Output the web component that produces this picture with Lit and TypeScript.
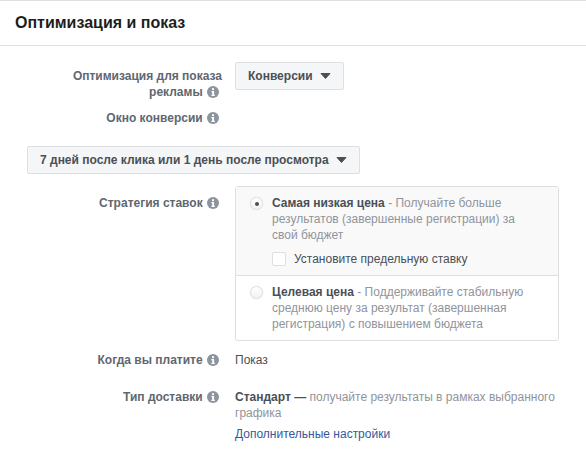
import { LitElement, html, css } from "lit";
import { customElement } from "lit/decorators.js";

const info = html`<svg class="info" viewBox="0 0 12 12" width="12" height="12"><circle cx="6" cy="6" r="6" fill="#8d949e"/><rect x="5" y="2.2" width="2" height="1.9" fill="#fff"/><path d="M4.4 5h2.7v3.8h.7V10H4.4V8.8h.8V6.2h-.8z" fill="#fff"/></svg>`;
const caret = html`<svg class="caret" viewBox="0 0 11 6" width="11" height="6"><path d="M1 .5h9L5.5 5.5z" fill="#4b4f56" stroke="#4b4f56" stroke-width="1" stroke-linejoin="round"/></svg>`;

@customElement("app-root")
export class AppRoot extends LitElement {
  static styles = css`
    :host { display: block; width: 586px; height: 456px; overflow: hidden; background: #fff; font-family: "Liberation Sans", Arial, sans-serif; font-size: 12px; line-height: 16px; color: #1c1e21; box-sizing: border-box; border-top: 1px solid #dddfe2; }
    .head { height: 45px; box-sizing: border-box; border-bottom: 1px solid #dddfe2; padding: 12px 15px 0; font-size: 16px; line-height: 20px; font-weight: bold; color: #1c1e21; }
    .body { display: flex; flex-direction: column; padding-top: 16px; }
    .row { display: flex; gap: 13px; }
    .label { width: 222px; box-sizing: border-box; padding-left: 50px; text-align: right; font-weight: bold; color: #606770; flex: none; }
    .info { vertical-align: -2px; margin: 0 3px 0 1px; }
    .value { width: 324px; box-sizing: border-box; flex: none; color: #4b4f56; }
    .btn { display: inline-flex; align-items: center; gap: 7px; height: 28px; box-sizing: border-box; padding: 0 12px; background: #f5f6f7; border: 1px solid #dddfe2; border-radius: 2px; font-weight: bold; color: #4b4f56; white-space: nowrap; }
    .r1 .label { padding-top: 6px; }
    .r2 { margin-top: 10px; }
    .r3 { margin: 20px 0 0 27px; }
    .r4 { margin-top: 12px; }
    .r4 .label { padding-top: 9px; }
    .box { border: 1px solid #dddfe2; border-radius: 3px; overflow: hidden; }
    .opt { display: flex; gap: 9px; padding: 8px 24px 8px 14px; color: #90949c; }
    .opt.sel { background: #f9f9fa; border-bottom: 1px solid #dddfe2; }
    .opt b { color: #4b4f56; }
    .radio { width: 13px; height: 13px; box-sizing: border-box; border-radius: 50%; border: 1px solid #dddfe2; background: linear-gradient(#fff, #f1f2f4); box-shadow: 0 0 1px #ccd0d5; flex: none; display: flex; align-items: center; justify-content: center; margin-top: 2px; }
    .radio i { width: 4px; height: 4px; border-radius: 50%; background: #4b4f56; display: block; }
    .check { display: flex; align-items: center; gap: 8px; margin-top: 8px; color: #4b4f56; }
    .check span { width: 14px; height: 14px; box-sizing: border-box; border: 1px solid #dddfe2; border-radius: 2px; background: #fff; }
    .r5 { margin-top: 11px; }
    .r6 { margin-top: 21px; }
    .grey { color: #90949c; }
    .grey b { color: #4b4f56; }
    a { display: block; margin-top: 5px; color: #365899; text-decoration: none; }
  `;

  render() {
    return html`
      <div class="head">Оптимизация и показ</div>
      <div class="body">
        <div class="row r1">
          <div class="label">Оптимизация для показа рекламы ${info}</div>
          <div class="value"><span class="btn">Конверсии ${caret}</span></div>
        </div>
        <div class="row r2"><div class="label">Окно конверсии ${info}</div></div>
        <div class="r3"><span class="btn">7 дней после клика или 1 день после просмотра ${caret}</span></div>
        <div class="row r4">
          <div class="label">Стратегия ставок ${info}</div>
          <div class="value box">
            <div class="opt sel">
              <span class="radio"><i></i></span>
              <div>
                <div><b>Самая низкая цена</b> - Получайте больше результатов (завершенные регистрации) за свой бюджет</div>
                <div class="check"><span></span>Установите предельную ставку</div>
              </div>
            </div>
            <div class="opt">
              <span class="radio"></span>
              <div><b>Целевая цена</b> - Поддерживайте стабильную среднюю цену за результат (завершенная регистрация) с повышением бюджета</div>
            </div>
          </div>
        </div>
        <div class="row r5"><div class="label">Когда вы платите ${info}</div><div class="value">Показ</div></div>
        <div class="row r6">
          <div class="label">Тип доставки ${info}</div>
          <div class="value"><div class="grey"><b>Стандарт —</b> получайте результаты в рамках выбранного графика</div><a>Дополнительные настройки</a></div>
        </div>
      </div>`;
  }
}
